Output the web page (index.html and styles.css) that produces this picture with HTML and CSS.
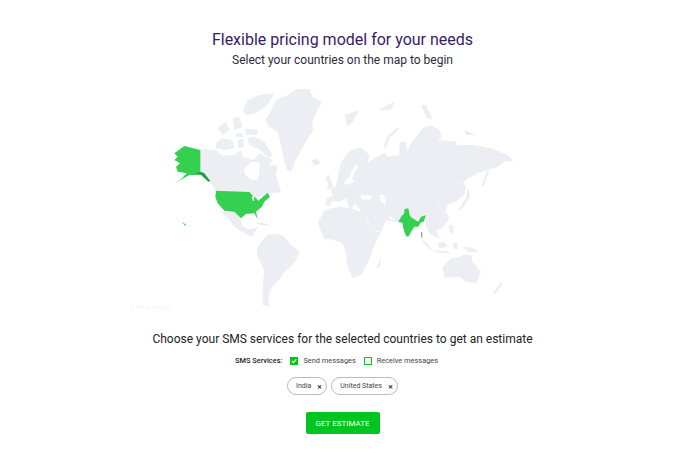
FILE: index.html
```html
<!DOCTYPE html>
<html lang="en">
<head>
    <meta charset="UTF-8">
    <title>Pricing</title>
    <link rel="stylesheet" href="styles.css">
</head>
<body>

<div class="container">
    <h1 class="title">Flexible pricing model for your needs</h1>
    <p class="subtitle">Select your countries on the map to begin</p>

    <svg class="map" viewBox="0 0 1320 705">
        <!-- americas -->
        <g class="land">
            <!-- greenland -->
            <path d="M432 123L448 95 465 60 500 45 530 27 565 27 575 50 603 65 590 90 575 120 575 155 555 185 540 210 525 240 510 277 498 270 488 235 480 195 470 155 445 140Z"/>
            <!-- canada -->
            <path d="M237 208L285 210 305 227 340 225 360 210 365 230 400 240 415 220 435 230 455 240 445 253 470 258 465 285 480 335 470 338 445 340 400 360 385 338 285 332 262 300 237 275Z"/>
            <path d="M365 90L380 60 415 45 460 40 440 75 405 100 375 105Z"/>
            <path d="M380 175L400 170 430 185 455 225 445 235 410 205 385 195Z"/>
            <path d="M285 190L300 175 335 180 340 205 310 210 285 205Z"/>
            <path d="M290 145L315 125 325 150 305 165Z"/>
            <path d="M335 115L355 110 365 140 340 150Z"/>
            <path d="M370 145L410 150 410 165 375 165Z"/>
            <path d="M350 180L365 175 370 200 352 205Z"/>
            <path d="M345 160L362 158 366 170 348 172Z"/>
            <path d="M570 240L590 237 598 250 580 257Z"/>
            <path d="M612 295L625 283 630 305 640 325 618 330 622 312Z"/>
            <!-- mexico -->
            <path d="M295 392L310 395 340 392 360 415 362 435 380 448 400 445 410 438 405 452 395 458 400 470 385 468 365 455 340 440 320 415Z"/>
            <path d="M395 428L425 428 452 436 425 436Z"/>
            <!-- south america -->
            <path d="M408 505L425 480 440 465 470 462 490 470 510 495 537 515 525 540 510 560 490 575 480 592 455 620 445 640 442 665 447 680 425 675 425 620 430 570 408 525Z"/>
        </g>
        <g class="selected">
            <path d="M285 332L385 336 393 345 405 355 412 362 440 338 447 350 430 365 423 380 405 395 410 418 400 400 375 402 360 415 340 395 310 392 290 370 283 350Z"/>
            <path d="M160 220L190 198 238 210 238 275 250 280 220 285 205 285 157 313 180 298 197 280 170 275 165 260 177 250 160 240 170 230Z"/>
            <path d="M180 427L188 429 197 436 192 437 188 431Z"/>
        </g>
        <path class="dark" d="M238 275L250 280 268 303 262 305 240 285 220 282Z"/>

        <g class="holes">
            <path d="M368 270L390 245 415 248 415 275 410 300 395 300 375 288Z"/>
            <path d="M393 350L398 345 400 362 395 362Z"/>
            <path d="M410 350L420 352 412 358Z"/>
        </g>

        <!-- old world -->
        <g transform="translate(630 0)">
            <g class="land">
                <!-- africa -->
                <path d="M-40 430L-20 392 0 385 30 380 60 385 100 400 108 420 125 450 150 458 130 495 115 540 90 585 65 595 50 560 42 510 35 490 0 478 -20 478Z"/>
                <!-- eurasia -->
                <path d="M-18 375L-12 355 5 345 0 330 15 318 22 285 30 245 60 210 90 202 115 225 110 250 125 238 150 225 160 218 170 230 205 225 205 185 225 185 228 215 240 190 255 170 275 145 300 135 325 150 332 170 320 180 375 185 380 195 430 195 480 205 530 225 548 242 520 245 500 260 470 270 440 280 410 295 395 310 405 320 400 345 375 365 350 372 345 395 355 415 335 445 315 450 325 475 300 465 285 440 285 410 265 425 235 470 215 430 190 425 165 420 150 455 125 450 105 408 90 402 85 385 70 372 58 395 45 355 25 365 5 362 -5 380Z"/>
                <!-- australia -->
                <path d="M335 560L360 535 385 530 395 525 420 525 425 545 450 575 435 610 405 605 385 590 340 595Z"/>
                <path d="M135 565L150 530 147 560Z"/>
                <path d="M485 640L510 605 515 615 495 640Z"/>
                <path d="M275 475L305 510 298 510 278 490Z"/>
                <path d="M320 490L340 485 350 500 325 505Z"/>
                <path d="M310 510L355 515 355 520 315 517Z"/>
                <path d="M365 490L380 490 378 510 368 505Z"/>
                <path d="M395 500L425 503 445 515 410 515Z"/>
                <path d="M355 435L365 435 370 465 355 455Z"/>
                <path d="M410 320L417 350 395 385 380 395 385 385 405 355Z"/>
                <path d="M452 315L470 265 475 270 458 320Z"/>
                <path d="M158 200L170 165 200 142 205 148 175 175 165 205Z"/>
                <path d="M40 105L85 90 65 125 50 140Z"/>
                <path d="M140 90L190 65 180 90Z"/>
                <path d="M270 75L285 75 305 120 285 110Z"/>
                <path d="M400 150L435 165 405 165Z"/>
            </g>
            <g class="holes">
                <path d="M90 345L125 348 115 360 92 358Z"/>
                <path d="M145 345L160 345 165 375 150 365Z"/>
                <path d="M38 310L55 290 75 250 78 262 62 295 70 305 45 315Z"/>
                <path d="M170 405L190 418 180 420Z"/>
            </g>
            <g class="borders">
                <path d="M60 385L70 470 45 545M0 430L120 450M70 470L125 490M20 310L70 330 170 320 300 330 400 300M170 320L160 400M300 330L345 410"/>
            </g>
            <path class="selected" d="M220 388L232 385 236 405 240 412 262 425 270 410 285 406 278 425 268 428 262 440 250 440 240 455 232 470 225 468 217 445 214 428 202 425 212 408 220 400Z"/>
            <path class="andaman" d="M270 455L274 457 274 475 270 470Z"/>
        </g>
        <text class="credit" x="24" y="686">JS map by amCharts</text>
    </svg>

    <h2 class="heading">Choose your SMS services for the selected countries to get an estimate</h2>

    <div class="services">
        <strong class="services-label">SMS Services:</strong>
        <span class="option">
            <span class="box checked">
                <svg viewBox="0 0 8 8"><path d="M1 4L3.2 6.2 7 1.8"/></svg>
            </span>
            Send messages
        </span>
        <span class="option">
            <span class="box"></span>
            Receive messages
        </span>
    </div>

    <div class="chips">
        <span class="chip">India <span class="chip-x">&#10005;</span></span>
        <span class="chip">United States <span class="chip-x">&#10005;</span></span>
    </div>

    <button class="estimate">GET ESTIMATE</button>
</div>

</body>
</html>
```

FILE: styles.css
```css
body {
    margin: 0;
    background-color: white;
    font-family: Roboto, sans-serif;
}
.container {
    display: flex;
    flex-direction: column;
    align-items: center;
    padding: 29px 0 0 3px;
    height: 424px;
    overflow: hidden;
}
.title {
    margin: 0;
    font-size: 16px;
    line-height: 22px;
    font-weight: 400;
    color: #3b1a68;
}
.subtitle {
    margin: 0;
    font-size: 12px;
    line-height: 18px;
    color: #2c2c3a;
}
.map {
    display: block;
    width: 440px;
    height: 235px;
    margin: 11px 0 0 -3px;
    filter: blur(0.4px);
}
.land path {
    fill: #edeef4;
}
.selected,
.selected path {
    fill: #34d04f;
}
.dark {
    fill: #2e9a4c;
}
.andaman {
    fill: #9aa0a8;
}
.holes path {
    fill: white;
}
.borders path {
    fill: none;
    stroke: #f2f3f6;
    stroke-width: 1.5;
}
.credit {
    font-size: 14px;
    fill: #f5f5f7;
}
.heading {
    margin: 15px 0 0;
    font-size: 12px;
    line-height: 18px;
    font-weight: 400;
    color: #222;
}
.services {
    display: flex;
    align-items: center;
    gap: 8px;
    margin: 6px 12px 0 0;
    font-size: 7.4px;
    line-height: 14px;
    color: #444;
}
.services-label {
    font-weight: 500;
    color: #222;
}
.option {
    display: flex;
    align-items: center;
    gap: 5px;
}
.box {
    display: block;
    box-sizing: border-box;
    width: 8px;
    height: 8px;
    border: 1px solid #00c41f;
}
.checked {
    background-color: #00c41f;
}
.checked svg {
    display: block;
    width: 6px;
    height: 6px;
}
.checked path {
    fill: none;
    stroke: white;
    stroke-width: 1.4;
}
.chips {
    display: flex;
    gap: 4px;
    margin-top: 9px;
}
.chip {
    display: flex;
    align-items: center;
    gap: 6px;
    box-sizing: border-box;
    height: 18px;
    padding: 0 4px 0 8px;
    border: 1px solid #bbb;
    border-radius: 10px;
    font-size: 7px;
    color: #444;
}
.chip-x {
    font-size: 6px;
    font-weight: 700;
    color: #222;
}
.estimate {
    width: 74px;
    height: 22px;
    margin-top: 17px;
    padding: 0;
    border: none;
    border-radius: 2px;
    background-color: #00c41f;
    color: white;
    font-family: Roboto, sans-serif;
    font-size: 8px;
}
```
